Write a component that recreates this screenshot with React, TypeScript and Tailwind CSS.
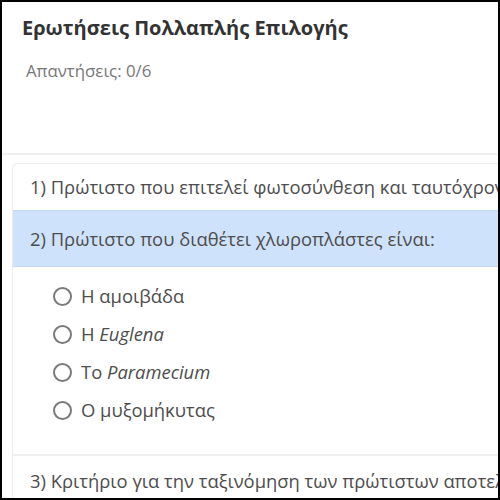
import { useState } from 'react';

const options = [
  { prefix: 'Η', rest: 'αμοιβάδα', italic: false },
  { prefix: 'Η', rest: 'Euglena', italic: true },
  { prefix: 'Το', rest: 'Paramecium', italic: true },
  { prefix: 'Ο', rest: 'μυξομήκυτας', italic: false },
];

function Radio({ checked }: { checked: boolean }) {
  return (
    <span className="w-[19px] h-[19px] rounded-full border-2 border-[#7a7a7a] flex items-center justify-center shrink-0">
      {checked && <span className="w-2 h-2 rounded-full bg-[#555]" />}
    </span>
  );
}

export default function App() {
  const [selected, setSelected] = useState<number | null>(null);

  return (
    <div
      className="w-[500px] h-[500px] border-2 border-black bg-white overflow-hidden text-[#4d4d4d]"
      style={{ fontFamily: '"Open Sans", "Noto Sans", sans-serif' }}
    >
      {/* Header */}
      <div className="h-[153px] border-b-2 border-[#f0f0f0] px-5 pt-3">
        <h1 className="text-[20px] font-bold text-[#333] leading-7">Ερωτήσεις Πολλαπλής Επιλογής</h1>
        <p className="mt-[16px] pl-1 text-[16.8px] text-[#777]">Απαντήσεις: 0/6</p>
      </div>

      {/* Questions */}
      <div className="pl-2.5 pt-2">
        <div className="border border-r-0 border-[#ececec] rounded-tl-md">
          <div className="h-[46px] flex items-center pl-[17px] text-[18.4px] whitespace-nowrap overflow-hidden">
            1) Πρώτιστο που επιτελεί φωτοσύνθεση και ταυτόχρονα τρέφεται ετερότροφα είναι:
          </div>
          <div className="h-[57px] flex items-center pl-[17px] text-[18.4px] whitespace-nowrap bg-[#cfe2fb] border-y border-[#c3d8f4]">
            2) Πρώτιστο που διαθέτει χλωροπλάστες είναι:
          </div>
          <div className="pl-10 pt-[18px] pb-[33px] flex flex-col gap-[16px]">
            {options.map((o, i) => (
              <label
                key={i}
                className="flex items-center gap-[9px] text-[18.4px] h-[22px] cursor-pointer"
                onClick={() => setSelected(i)}
              >
                <Radio checked={selected === i} />
                <span>
                  {o.prefix} {o.italic ? <i>{o.rest}</i> : o.rest}
                </span>
              </label>
            ))}
          </div>
          <div className="h-[52px] flex items-center pl-[17px] text-[18.4px] whitespace-nowrap overflow-hidden border-t-2 border-[#f0f0f0]">
            3) Κριτήριο για την ταξινόμηση των πρώτιστων αποτελεί:
          </div>
        </div>
      </div>
    </div>
  );
}
